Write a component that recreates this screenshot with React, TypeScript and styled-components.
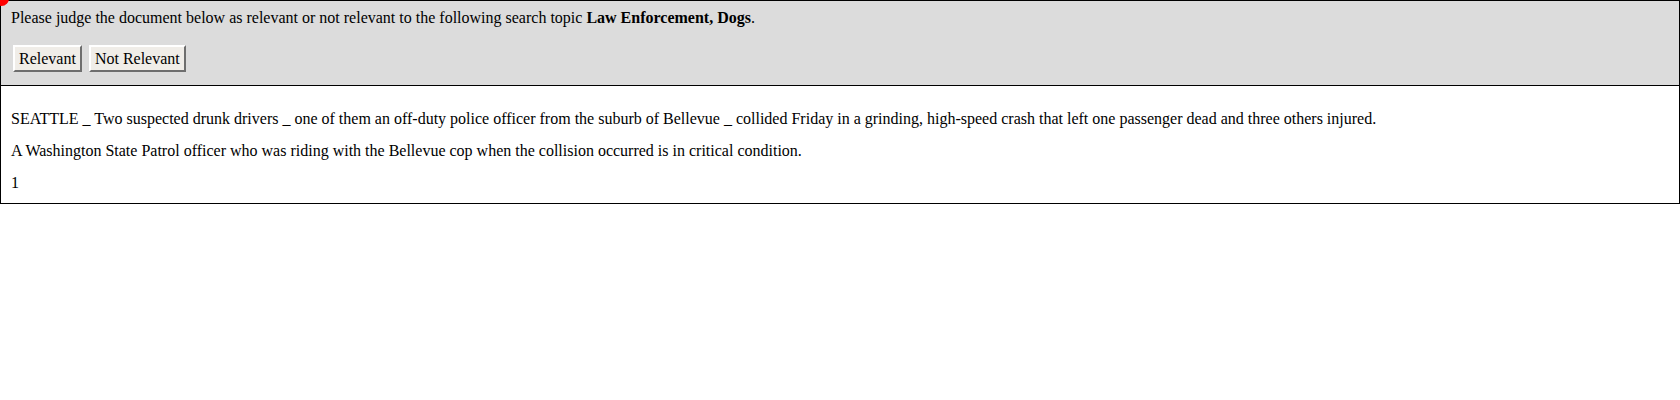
import React from 'react';
import styled, { createGlobalStyle } from 'styled-components';

const GlobalStyle = createGlobalStyle`
  html, body {
    margin: 0;
    padding: 0;
    background: #ffffff;
  }
  body {
    font-family: "Liberation Serif", "Times New Roman", serif;
    font-size: 16px;
    color: #000000;
  }
`;

const Page = styled.div`
  position: relative;
  display: flex;
  flex-direction: column;
`;

const Marker = styled.span`
  position: absolute;
  left: -6px;
  top: -9px;
  width: 15px;
  height: 15px;
  border-radius: 50%;
  background: #ff0000;
`;

const JudgePanel = styled.div`
  background: #dcdcdc;
  border: 1px solid #000000;
  padding: 8px 10px 13px 10px;
  display: flex;
  flex-direction: column;
  gap: 18px;
`;

const Prompt = styled.div`
  line-height: 18px;
`;

const ButtonRow = styled.div`
  display: flex;
  gap: 7px;
  padding-left: 2px;
`;

const JudgeButton = styled.button`
  font-family: "Liberation Serif", "Times New Roman", serif;
  font-size: 16px;
  color: #000000;
  background: #f0ede8;
  height: 27px;
  padding: 0 4px;
  border: 2px solid;
  border-color: #ffffff #6e6e6e #6e6e6e #ffffff;
  cursor: pointer;
`;

const DocPanel = styled.div`
  border: 1px solid #000000;
  border-top: none;
  padding: 24px 10px 11px 10px;
  display: flex;
  flex-direction: column;
  gap: 14px;
`;

const DocLine = styled.p`
  margin: 0;
  line-height: 18px;
`;

const docLines = [
  'SEATTLE _ Two suspected drunk drivers _ one of them an off-duty police officer from the suburb of Bellevue _ collided Friday in a grinding, high-speed crash that left one passenger dead and three others injured.',
  'A Washington State Patrol officer who was riding with the Bellevue cop when the collision occurred is in critical condition.',
  '1',
];

export default function App() {
  return (
    <Page>
      <GlobalStyle />
      <Marker />
      <JudgePanel>
        <Prompt>
          Please judge the document below as relevant or not relevant to the following search topic{' '}
          <b>Law Enforcement, Dogs</b>.
        </Prompt>
        <ButtonRow>
          <JudgeButton>Relevant</JudgeButton>
          <JudgeButton>Not Relevant</JudgeButton>
        </ButtonRow>
      </JudgePanel>
      <DocPanel>
        {docLines.map((line, i) => (
          <DocLine key={i}>{line}</DocLine>
        ))}
      </DocPanel>
    </Page>
  );
}
